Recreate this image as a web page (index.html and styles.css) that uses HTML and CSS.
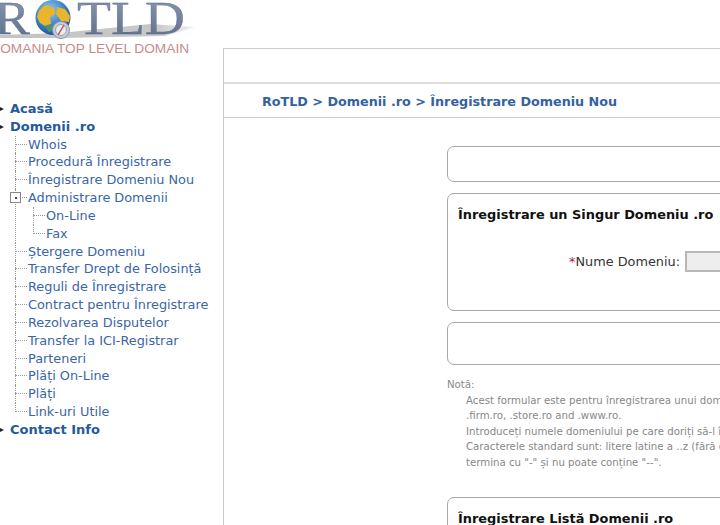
FILE: index.html
```html
<!DOCTYPE html>
<html lang="ro">
<head>
<meta charset="utf-8">
<title>RoTLD</title>
<link rel="stylesheet" href="styles.css">
</head>
<body>
<div class="page">
  <aside class="side">
    <svg class="logo" width="223" height="60" viewBox="0 0 223 60">
      <defs>
        <linearGradient id="ink" x1="0" y1="0" x2="0" y2="1">
          <stop offset="0" stop-color="#8d9bb2"/><stop offset="1" stop-color="#5b6c88"/>
        </linearGradient>
        <radialGradient id="globe" cx=".4" cy=".3" r=".75">
          <stop offset="0" stop-color="#9ccbee"/><stop offset=".65" stop-color="#2f78c0"/><stop offset="1" stop-color="#1d4f94"/>
        </radialGradient>
        <linearGradient id="shade" x1="0" y1="0" x2="1" y2="0">
          <stop offset="0" stop-color="#c4c4c4"/><stop offset=".8" stop-color="#c8c8c8"/><stop offset="1" stop-color="#f2f2f2"/>
        </linearGradient>
      </defs>
      <path d="M0 35 L60 33 L150 24 L195 27 L165 36 L60 38 L0 38 Z" fill="url(#shade)"/>
      <text class="logo-letters" x="-6" y="34" textLength="36" lengthAdjust="spacingAndGlyphs">R</text>
      <text class="logo-letters" x="77" y="34" textLength="108" lengthAdjust="spacingAndGlyphs">TLD</text>
      <circle cx="53" cy="17.5" r="17.5" fill="url(#globe)"/>
      <path d="M37 17 Q39 8 46 5 L54 8 L55 14 L50 17 L51 24 L45 26 L40 23 Z" fill="#e9b52a"/>
      <path d="M57 7 L65 9 L70 16 L69 22 L61 21 L56 14 Z" fill="#e9b52a"/>
      <path d="M44 26 L52 24 L54 30 L49 32 Z" fill="#4f8f78"/>
      <circle cx="61" cy="30" r="8.5" fill="#c8ccd4" stroke="#8b93a3"/>
      <circle cx="61" cy="30" r="5.5" fill="#e8eaee" stroke="#9aa2b0"/>
      <path d="M64 25 L61 30 L58 35" stroke="#b5505a" stroke-width="1.4" fill="none"/>
      <text class="logo-tag" x="-9.7" y="53">ROMANIA TOP LEVEL DOMAIN</text>
    </svg>
    <ul class="tree">
      <li class="top"><span class="bullet"></span><a>Acasă</a></li>
      <li class="top"><span class="bullet"></span><a>Domenii .ro</a>
        <ul class="sub">
          <li><a>Whois</a></li>
          <li><a>Procedură Înregistrare</a></li>
          <li><a>Înregistrare Domeniu Nou</a></li>
          <li class="open"><span class="toggle"></span><a>Administrare Domenii</a>
            <ul class="sub inner">
              <li><a>On-Line</a></li>
              <li><a>Fax</a></li>
            </ul>
          </li>
          <li><a>Ștergere Domeniu</a></li>
          <li><a>Transfer Drept de Folosință</a></li>
          <li><a>Reguli de Înregistrare</a></li>
          <li><a>Contract pentru Înregistrare</a></li>
          <li><a>Rezolvarea Disputelor</a></li>
          <li><a>Transfer la ICI-Registrar</a></li>
          <li><a>Parteneri</a></li>
          <li><a>Plăți On-Line</a></li>
          <li><a>Plăți</a></li>
          <li><a>Link-uri Utile</a></li>
        </ul>
      </li>
      <li class="top"><span class="bullet"></span><a>Contact Info</a></li>
    </ul>
  </aside>
  <main class="main">
    <div class="topbar"></div>
    <div class="crumbs">RoTLD &gt; Domenii .ro &gt; Înregistrare Domeniu Nou</div>
    <div class="content">
      <div class="card c1"></div>
      <form class="card c2">
        <h2>Înregistrare un Singur Domeniu .ro</h2>
        <div class="field"><label><span class="req">*</span>Nume Domeniu:</label><input class="input" type="text"></div>
      </form>
      <div class="card c3"></div>
      <div class="note">
        <div>Notă:</div>
        <p>Acest formular este pentru înregistrarea unui domeniu .ro, .com.ro, .org.ro, .info.ro, .nom.ro, .rec.ro, .nt.ro, .tm.ro,<br>
        .firm.ro, .store.ro and .www.ro.<br>
        Introduceți numele domeniului pe care doriți să-l înregistrați.<br>
        Caracterele standard sunt: litere latine a ..z (fără diacritice), cifre 0..9 și "-". Numele nu poate începe sau<br>
        termina cu "-" și nu poate conține "--".</p>
      </div>
      <div class="card c4"><h2>Înregistrare Listă Domenii .ro</h2></div>
    </div>
  </main>
</div>
</body>
</html>
```
FILE: styles.css
```css
* { box-sizing: border-box; }
html, body { margin: 0; height: 525px; overflow: hidden; background: #fff; }
body { font-family: "DejaVu Sans", Verdana, sans-serif; font-size: 12.85px; color: #222; }
.page { display: flex; width: 720px; height: 525px; overflow: hidden; }
.side { flex: 0 0 223px; }
.logo { display: block; }
.logo-letters { font-family: "Liberation Serif", serif; font-size: 47px; fill: url(#ink); stroke: #56678a; stroke-width: .3px; }
.logo-tag { font-family: "Liberation Sans", sans-serif; font-size: 13.7px; fill: #c48b8d; }

.tree, .sub { list-style: none; margin: 0; padding: 0; }
.tree { margin-top: 40px; }
.tree a { color: #3a66a6; white-space: nowrap; }
.tree li { line-height: 17.83px; position: relative; }
.top { padding-left: 10px; }
.tree .top > a { font-weight: bold; font-size: 13px; color: #235a9e; }
.bullet { position: absolute; left: 0; top: 7px; width: 0; height: 0; border-left: 4px solid #222; border-top: 2.5px solid transparent; border-bottom: 2.5px solid transparent; }
.sub { margin-left: -10px; padding-left: 28px; }
.sub li::before { content: ""; position: absolute; left: -13px; top: 8px; width: 12px; border-top: 1px dotted #999; }
.sub li::after { content: ""; position: absolute; left: -13px; top: 0; height: 100%; border-left: 1px dotted #999; }
.sub li:last-child::after { height: 9px; }
.sub.inner { margin-left: 0; padding-left: 18px; }
.toggle { position: absolute; left: -18px; top: 3px; width: 11px; height: 11px; border: 1px solid #888; background: #fff; z-index: 1; }
.toggle::after { content: ""; position: absolute; left: 3.5px; top: 3.5px; width: 2px; height: 2px; background: #444; }

.main { flex: 1 1 0; min-width: 0; margin-top: 48px; border-left: 1px solid #ccc; border-top: 1px solid #ccc; }
.topbar { height: 35px; border-bottom: 2px solid #ddd; }
.crumbs { height: 34px; border-bottom: 1px solid #ccc; padding: 9px 0 0 38px; font-weight: bold; font-size: 12.74px; color: #35629f; white-space: nowrap; line-height: 17px; }
.content { padding: 28px 0 0 223px; width: 760px; }
.card { border: 1px solid #a8a8a8; border-radius: 7px; background: #fff; }
.c1 { height: 36px; }
.c2 { height: 118px; margin-top: 11px; padding: 12px 10px 0; }
.c3 { height: 43px; margin-top: 11px; }
.c4 { height: 60px; margin-top: 27px; padding: 12px 10px 0; }
h2 { margin: 0; font-size: 12.9px; line-height: 17px; color: #111; font-weight: bold; white-space: nowrap; }
.field { display: flex; align-items: center; margin: 28px 0 0 111px; }
.req { color: #b3234a; }
label { color: #333; font-size: 12.85px; white-space: nowrap; }
.input { width: 60px; height: 21px; margin-left: 5px; border: 2px solid #b8b8b8; background: #eee; padding: 0; flex: none; }
.note { margin-top: 12px; font-size: 10.2px; color: #888; line-height: 15.5px; white-space: nowrap; }
.note p { margin: 0 0 0 19px; }
```
